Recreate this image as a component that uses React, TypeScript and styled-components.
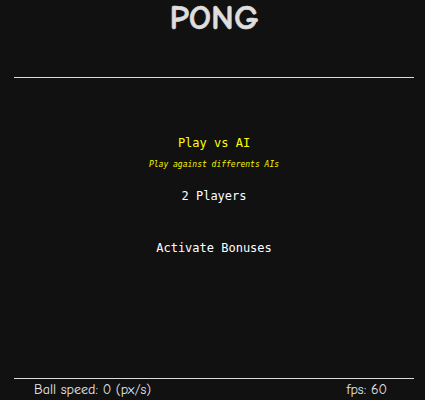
import React from "react";
import styled, { createGlobalStyle } from "styled-components";

const Global = createGlobalStyle`
  html, body { margin: 0; padding: 0; background: #111111; }
  body { width: 425px; height: 400px; overflow: hidden; }
`;

const Page = styled.div`
  width: 400px;
  height: 400px;
  margin-left: 14px;
  display: flex;
  flex-direction: column;
  color: #e0e0e0;
`;

const Title = styled.h1`
  margin: 0;
  height: 78px;
  box-sizing: border-box;
  text-align: center;
  font-family: "Comic Sans MS", "Comic Neue", cursive;
  font-size: 35px;
  font-weight: 900;
  line-height: 36px;
  color: #dedede;
  border-bottom: 1px solid #dcdcdc;
  -webkit-text-stroke: 0.6px #dedede;
`;

const Menu = styled.div`
  flex: 1;
  display: flex;
  flex-direction: column;
  align-items: center;
  padding-top: 57px;
  font-family: "DejaVu Sans Mono", monospace;
`;

const Item = styled.div<{ $active?: boolean; $gap?: number }>`
  font-size: 12px;
  line-height: 16px;
  margin-top: ${(p) => p.$gap ?? 0}px;
  color: ${(p) => (p.$active ? "#ffff00" : "#ffffff")};
`;

const Sub = styled.div`
  font-size: 8px;
  line-height: 10px;
  font-style: italic;
  color: #f5f500;
  margin-top: 9px;
`;

const Footer = styled.div`
  border-top: 1px solid #dcdcdc;
  height: 21px;
  display: flex;
  justify-content: space-between;
  align-items: center;
  padding: 0 27px 0 20px;
  font-family: "Comic Sans MS", "Comic Neue", cursive;
  font-size: 14px;
  color: #e8e8e8;
`;

export default function App() {
  return (
    <>
      <Global />
      <Page>
        <Title>PONG</Title>
        <Menu>
          <Item $active>Play vs AI</Item>
          <Sub>Play against differents AIs</Sub>
          <Item $gap={18}>2 Players</Item>
          <Item $gap={36}>Activate Bonuses</Item>
        </Menu>
        <Footer>
          <span>Ball speed: 0 (px/s)</span>
          <span>fps: 60</span>
        </Footer>
      </Page>
    </>
  );
}
